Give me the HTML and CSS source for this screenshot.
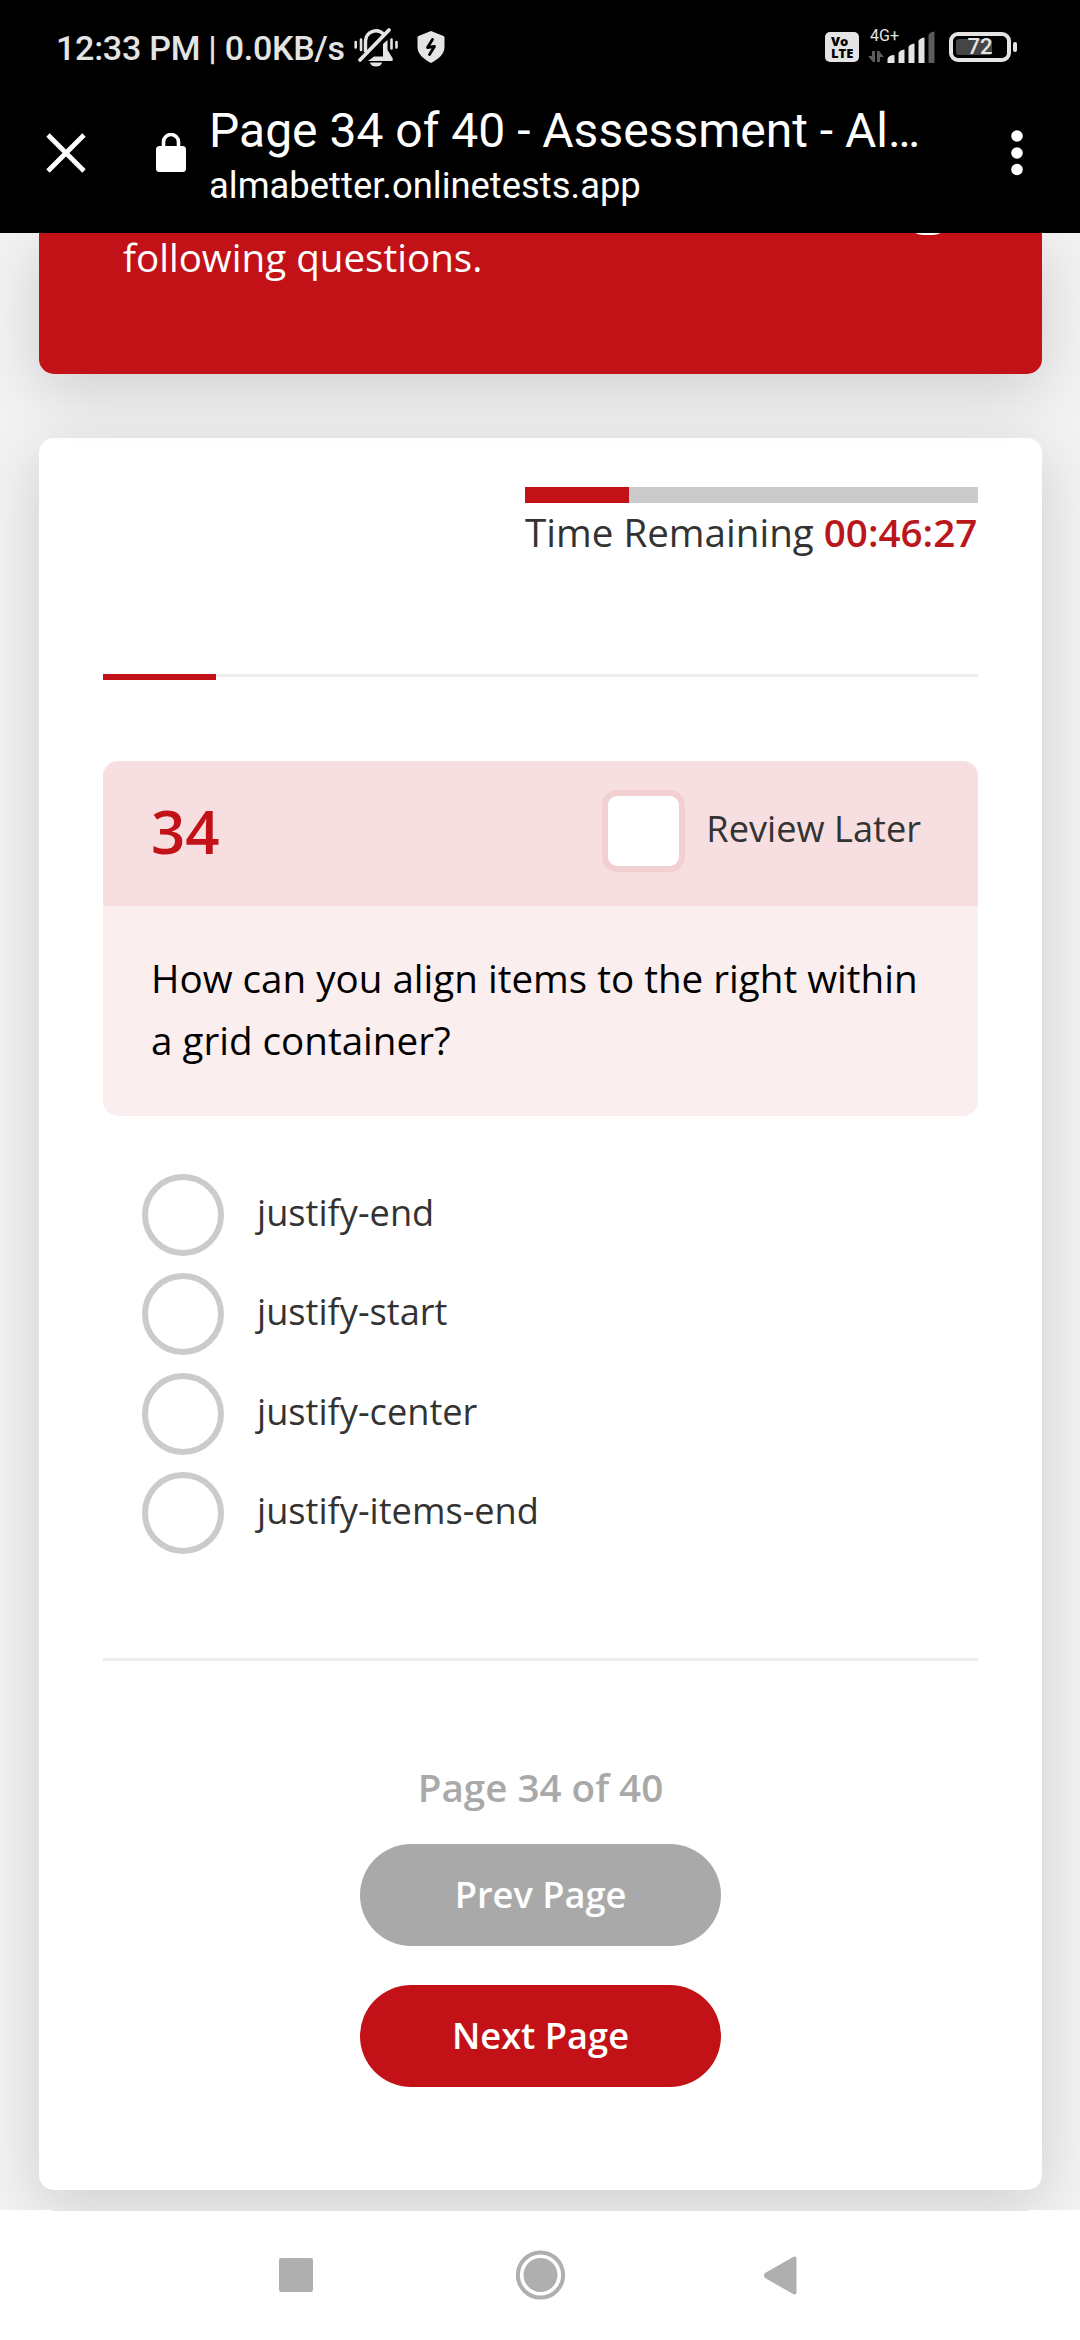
FILE: index.html
```html
<!DOCTYPE html>
<html lang="en">
<head>
<meta charset="utf-8">
<title>Page 34 of 40 - Assessment</title>
<link rel="stylesheet" href="styles.css">
</head>
<body>
<div class="phone">
  <header class="chrome">
    <div class="status">
      <span class="clock">12:33 PM | 0.0KB/s</span>
      <svg class="bell" width="46" height="42" viewBox="0 0 46 42" fill="none" stroke="#e4e4e4">
        <path d="M11.500 26V15a10.500 10.500 0 0 1 18-7" stroke-width="3.400"/>
        <path d="M6 34 35 4" stroke-width="3.800" stroke-linecap="round"/>
        <path d="M33.500 14v10l5 8q1 3-1 3H14l6-4.500h9V18z" fill="#e4e4e4" stroke="none"/>
        <path d="M16 36.500h12a6 4 0 0 1-12 0z" fill="#e4e4e4" stroke="none"/>
        <path d="M1.700 16v5.500M7 13.500v10.500M37.500 13.500v9M42.500 16v5.500" stroke-width="2.600" stroke-linecap="round"/>
      </svg>
      <svg class="shield" width="28" height="34" viewBox="0 0 28 34">
        <path d="M14 1 26.500 6q1 .500 1 1.500V17c0 7-6 12-13.500 16C6.500 29 .500 24 .500 17V7.500Q.500 6.500 1.500 6z" fill="#e4e4e4"/>
        <path d="M15.500 9.500 10.500 17.500 17.500 16.500 12.500 24.500" fill="none" stroke="#000" stroke-width="2.800" stroke-linejoin="round" stroke-linecap="round"/>
      </svg>
      <span class="spacer"></span>
      <span class="volte"><span>Vo</span><span>LTE</span></span>
      <span class="signal">
        <span class="net">4G+</span>
        <svg width="68" height="34" viewBox="0 0 68 34">
          <path d="M7 21v11H5l-5-6h4v-5zM9 32V21h2l5 6h-4v5z" fill="#5c5c5c"/>
          <g fill="#e4e4e4">
            <path d="M19.500 33v-4q1-4 7-4v8z"/><path d="M30.500 33V23q1-3 6-3.500V33z"/><path d="M40.500 33V17q1-3 6-3.500V33z"/><path d="M50.500 33V11q1-3 6-3.500V33z"/>
          </g>
          <path d="M60.500 33V5q1-3 6-3.500V33z" fill="#5c5c5c"/>
        </svg>
      </span>
      <span class="battery"><span class="level"></span><span class="pct">72</span></span>
      <span class="nub"></span>
    </div>
    <div class="toolbar">
      <svg class="close" width="40" height="40" viewBox="0 0 40 40"><path d="M2 2 38 38M38 2 2 38" stroke="#fff" stroke-width="4.800"/></svg>
      <svg class="lock" width="30" height="40" viewBox="0 0 30 40"><rect y="13" width="30" height="26" rx="3.500" fill="#fff"/><path d="M7.500 15V9a7.500 7.500 0 0 1 15 0v6" fill="none" stroke="#fff" stroke-width="3.600"/></svg>
      <div class="titles">
        <div class="title">Page 34 of 40 - Assessment - Al…</div>
        <div class="url">almabetter.onlinetests.app</div>
      </div>
      <svg class="dots" width="12" height="46" viewBox="0 0 12 46" fill="#fff"><circle cx="6" cy="6" r="5.800"/><circle cx="6" cy="23" r="5.800"/><circle cx="6" cy="39.500" r="5.800"/></svg>
    </div>
  </header>

  <main class="page">
    <section class="banner">
      <span class="badge"></span>
      <p class="intro">following questions.</p>
    </section>
    <section class="card">
      <div class="timer">
        <div class="timer-bar"><div class="timer-fill"></div></div>
        <div class="timer-text">Time Remaining <b>00:46:27</b></div>
      </div>
      <div class="progress"><div class="progress-fill"></div></div>
      <div class="question">
        <div class="question-head">
          <span class="number">34</span>
          <span class="box"></span>
          <span class="review">Review Later</span>
        </div>
        <p class="question-text">How can you align items to the right within a grid container?</p>
      </div>
      <div class="options">
        <div class="option"><span class="radio"></span><span class="label">justify-end</span></div>
        <div class="option"><span class="radio"></span><span class="label">justify-start</span></div>
        <div class="option"><span class="radio"></span><span class="label">justify-center</span></div>
        <div class="option"><span class="radio"></span><span class="label">justify-items-end</span></div>
      </div>
      <footer class="pager">
        <div class="count">Page 34 of 40</div>
        <div class="btn prev">Prev Page</div>
        <div class="btn next">Next Page</div>
      </footer>
    </section>
  </main>

  <nav class="navbar">
    <svg width="1080" height="129" viewBox="0 0 1080 129" fill="#afafaf">
      <path d="M52 0H1028V1H52z" fill="#e4e4e4"/>
      <rect x="279" y="48" width="34" height="34" rx="2"/>
      <circle cx="540.500" cy="65" r="22.600" fill="none" stroke="#afafaf" stroke-width="4"/>
      <circle cx="540.500" cy="65" r="17"/>
      <path d="M794.500 48.500v34L766.500 66.500q-1-1 0-2z" stroke="#afafaf" stroke-width="4" stroke-linejoin="round"/>
    </svg>
  </nav>
</div>
</body>
</html>
```

FILE: styles.css
```css
* { box-sizing: border-box; }
body { margin: 0; background: #fff; font-family: "Open Sans", "Noto Sans", sans-serif; }
p { margin: 0; }
svg { display: block; flex: none; }
.phone { width: 1080px; height: 2340px; overflow: hidden; display: flex; flex-direction: column; }

/* Browser chrome */
.chrome { height: 233px; flex: none; background: #000; color: #fff; font-family: Roboto, sans-serif; position: relative; z-index: 2; }
.status { height: 96px; padding: 0 63px 2px 56px; display: flex; align-items: center; color: #e4e4e4; }
.clock { width: 298px; margin-top: 2px; font-size: 34px; font-weight: 500; line-height: 40px; letter-spacing: -.250px; white-space: pre; }
.shield { margin-left: 17px; }
.spacer { flex: 1; }
.volte { width: 34px; height: 30px; border-radius: 5px; background: #e4e4e4; color: #000; display: flex; flex-direction: column; padding: 3px 0 0 6px; font: 800 13px/12px "Open Sans", sans-serif; }
.signal { position: relative; width: 68px; margin: 0 13px 0 9px; }
.net { position: absolute; left: 2px; top: -3px; font-size: 16px; line-height: 18px; }
.battery { position: relative; width: 62px; height: 30px; border: 4px solid #e4e4e4; border-radius: 9px; display: flex; align-items: center; justify-content: center; }
.level { position: absolute; left: 3px; top: 3px; width: 36px; height: 16px; border-radius: 3px; background: #454545; }
.pct { position: relative; font-size: 22px; font-weight: 500; line-height: 22px; }
.nub { width: 4px; height: 10px; margin-left: 2px; border-radius: 2px; background: #e4e4e4; }
.toolbar { height: 137px; display: flex; align-items: flex-start; padding-left: 46px; }
.close { margin-top: 37px; }
.lock { margin: 37px 0 0 70px; }
.titles { margin-left: 23px; width: 802px; white-space: nowrap; }
.title { font-size: 48px; line-height: 56px; padding-top: 7px; }
.url { font-size: 36.400px; line-height: 42px; margin-top: 6px; }
.dots { margin-top: 34px; }

/* Page */
.page { height: 1977px; flex: none; background: #f2f2f2; padding: 0 38px 0 39px; overflow: hidden; }
.banner, .card { box-shadow: 0 15px 60px rgba(0, 0, 0, .15); }
.banner { position: relative; z-index: 1; height: 141px; background: #c21217; color: #fff; border-radius: 0 0 15px 15px; padding: 0 84px; }
.badge { position: absolute; left: 877px; top: 0; width: 24px; height: 2px; background: #fff; border-radius: 0 0 12px 12px / 0 0 2px 2px; }
.intro { font-size: 38.600px; line-height: 48px; }
.card { margin-top: 64px; height: 1752px; background: #fff; border-radius: 15px; padding: 49px 64px 0; }
.timer { width: 453px; margin-left: auto; color: #333; }
.timer-bar { height: 16px; background: #cbcbcb; }
.timer-fill { height: 16px; width: 104px; background: #c21217; }
.timer-text { font-size: 38.600px; line-height: 54px; margin-top: 2px; white-space: nowrap; }
.timer-text b { font-weight: 600; color: #b9171c; }
.progress { margin-top: 115px; height: 87px; border-top: 3px solid #ededed; }
.progress-fill { width: 113px; height: 6px; margin-top: -3px; background: #c21217; }
.question { border-radius: 15px; overflow: hidden; background: #faeeee; height: 355px; }
.question-head { height: 145px; background: #f6dee1; padding: 0 57px 0 48px; display: flex; align-items: flex-start; }
.number { font-size: 60px; line-height: 82px; margin-top: 29px; font-weight: 600; color: #c21217; flex: 1; }
.box { width: 83px; height: 82px; margin-top: 29px; border: 6px solid #f2d0d2; border-radius: 15px; background: #fff; }
.review { font-size: 36.200px; line-height: 50px; margin: 42px 0 0 21px; color: #333; }
.question-text { font-size: 38.600px; line-height: 62.400px; padding: 40.500px 48px; color: #000; }
.options { padding: 58px 0 0 39px; }
.option { display: flex; align-items: flex-start; height: 99.330px; }
.radio { width: 82px; height: 82px; border: 6px solid #cbcbcb; border-radius: 50%; }
.label { font-size: 36.200px; line-height: 50px; margin: 13px 0 0 33px; color: #333; }
.pager { margin-top: 86.680px; border-top: 3px solid #ededed; display: flex; flex-direction: column; align-items: center; }
.count { margin-top: 99px; font-size: 38.600px; line-height: 54px; font-weight: 600; color: #a9a9a9; }
.btn { width: 361px; height: 102px; border-radius: 51px; font-size: 36.200px; line-height: 100px; font-weight: 600; color: #fff; text-align: center; }
.prev { margin-top: 30px; background: #a9a9a9; }
.next { margin-top: 39px; background: #c21217; }
.navbar { height: 130px; background: #fff; flex: none; }
```
